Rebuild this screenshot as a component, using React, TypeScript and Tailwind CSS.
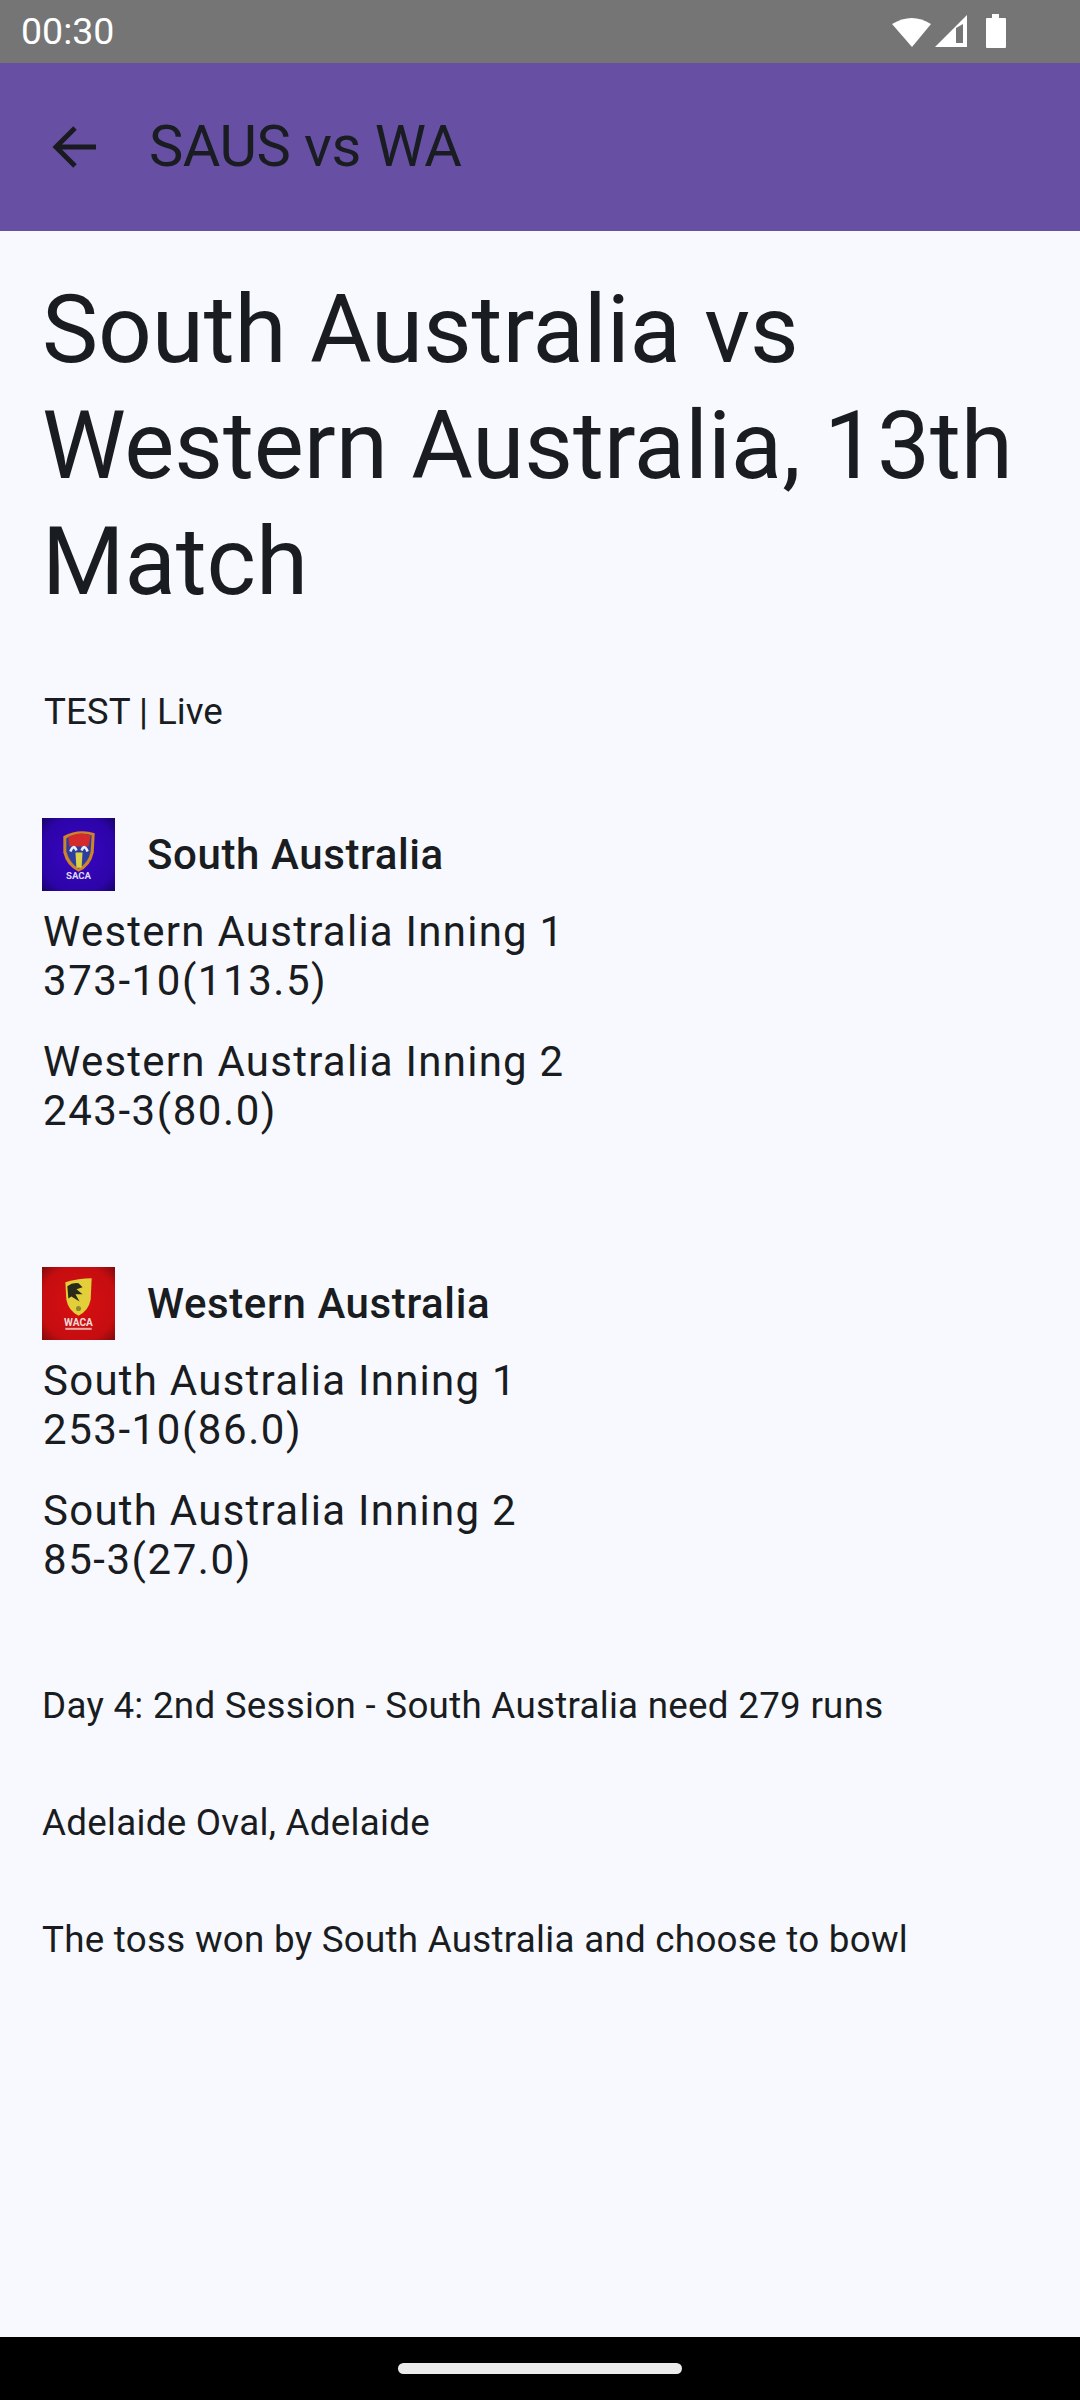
const innings = [
  {
    team: 'South Australia',
    logo: 'saca',
    scores: [
      ['Western Australia Inning 1', '373-10(113.5)'],
      ['Western Australia Inning 2', '243-3(80.0)'],
    ],
  },
  {
    team: 'Western Australia',
    logo: 'waca',
    scores: [
      ['South Australia Inning 1', '253-10(86.0)'],
      ['South Australia Inning 2', '85-3(27.0)'],
    ],
  },
];

const notes = [
  'Day 4: 2nd Session - South Australia need 279 runs',
  'Adelaide Oval, Adelaide',
  'The toss won by South Australia and choose to bowl',
];

function SacaLogo() {
  return (
    <svg viewBox="0 0 72 72" className="w-[73px] h-[73px] shrink-0">
      <defs>
        <radialGradient id="saca-bg" cx="0.5" cy="0.5" r="0.75">
          <stop offset="0" stopColor="#3a06c4" />
          <stop offset="0.7" stopColor="#2c04a8" />
          <stop offset="1" stopColor="#150358" />
        </radialGradient>
      </defs>
      <rect width="72" height="72" fill="url(#saca-bg)" />
      <path d="M21 18 Q36 10 52 15 L51 34 Q48 48 36 53 Q24 47 21 34 Z" fill="#d0842a" />
      <path d="M24 20 Q36 13 49 17 L48 33 Q46 44 36 50 Q27 44 24 33 Z" fill="#2d3f9e" />
      <path d="M26 19 Q36 13 48 17 L46 28 L27 28 Z" fill="#d42a2c" />
      <path d="M33 34 L40 34 L39 49 L34 49 Z" fill="#dcd24a" />
      <path d="M28 33 Q31 25 34 32 M45 33 Q42 25 39 32" stroke="#e8eefc" strokeWidth="2.5" fill="none" />
      <text x="36" y="60" textAnchor="middle" fontFamily="Roboto, sans-serif" fontWeight="700" fontSize="9.5" fill="#dcdaf4">SACA</text>
    </svg>
  );
}

function WacaLogo() {
  return (
    <svg viewBox="0 0 72 72" className="w-[73px] h-[73px] shrink-0">
      <defs>
        <radialGradient id="waca-bg" cx="0.5" cy="0.5" r="0.75">
          <stop offset="0" stopColor="#d80f12" />
          <stop offset="0.7" stopColor="#c50d10" />
          <stop offset="1" stopColor="#6e0a0c" />
        </radialGradient>
      </defs>
      <rect width="72" height="72" fill="url(#waca-bg)" />
      <path d="M23 15 Q36 11 49 11 L48 32 Q46 43 36 48 Q26 43 24 32 Z" fill="#e2cf3a" />
      <path d="M25 19 Q30 15 36 16 L40 20 L34 22 L40 27 L33 27 L37 34 L29 29 L26 31 Z" fill="#2a2a18" />
      <circle cx="36" cy="41" r="2.5" fill="#8b8a2c" />
      <text x="36" y="58" textAnchor="middle" fontFamily="Roboto, sans-serif" fontWeight="700" fontSize="10" fill="#f3dcd8">WACA</text>
      <rect x="23" y="60" width="26" height="2" fill="#e8a8a0" />
    </svg>
  );
}

export default function App() {
  return (
    <div className="w-[1080px] h-[2400px] flex flex-col bg-[#f8f9ff] text-[#191c20] font-['Roboto',sans-serif] overflow-hidden">
      <div className="h-[63px] shrink-0 bg-[#757575] flex items-center justify-between pl-[21px] pr-[72px] text-white">
        <span className="text-[37.5px] leading-none">00:30</span>
        <svg width="116" height="36" viewBox="0 0 116 36" fill="white">
          <path d="M0 10 Q20 -2 39 10 L20 33 Z" />
          <path fillRule="evenodd" d="M43 33 L75 1 L75 33 Z M64 14 L64 29 L71 29 L71 10 Z" />
          <path d="M94 5 Q94 4 95 4 L100 4 L100 0 L107 0 L107 4 L113 4 Q114 4 114 5 L114 33 Q114 34 113 34 L95 34 Q94 34 94 33 Z" />
        </svg>
      </div>

      <div className="h-[168px] shrink-0 bg-[#6750a4] flex items-center pl-[52px]">
        <svg width="44" height="44" viewBox="0 0 44 44" fill="none" stroke="#1a1b20" strokeWidth="5">
          <path d="M44 22 L4 22 M23 3 L4 22 L23 41" />
        </svg>
        <h1 className="ml-[53px] text-[57.75px] leading-none font-normal tracking-[-0.5px]">SAUS vs WA</h1>
      </div>

      <main className="flex-1 px-[42px] pt-[41px]">
        <h2 className="text-[94.5px] leading-[116px] font-normal tracking-[-0.1px]">South Australia vs Western Australia, 13th Match</h2>
        <p className="mt-[71px] ml-[2px] text-[36.75px] leading-[42px]">TEST | Live</p>

        <div className="mt-[85px] flex flex-col gap-[132px]">
          {innings.map((side) => (
            <section key={side.team}>
              <div className="flex items-center gap-[32px]">
                {side.logo === 'saca' ? <SacaLogo /> : <WacaLogo />}
                <h3 className="text-[42px] leading-[49px] font-medium tracking-[0.6px]">{side.team}</h3>
              </div>
              <div className="mt-[16px] ml-[1px] flex flex-col gap-[32px]">
                {side.scores.map(([label, score]) => (
                  <p key={label} className="text-[42px] leading-[49px] tracking-[1.25px]">
                    {label}
                    <br />
                    <span className="tracking-[1.55px]">{score}</span>
                  </p>
                ))}
              </div>
            </section>
          ))}
        </div>

        <div className="mt-[101px] flex flex-col gap-[75px]">
          {notes.map((note) => (
            <p key={note} className="text-[36.75px] leading-[42px] tracking-[0.27px]">{note}</p>
          ))}
        </div>
      </main>

      <div className="h-[63px] shrink-0 bg-black flex items-center justify-center">
        <div className="w-[284px] h-[11px] rounded-full bg-[#ebebeb]"></div>
      </div>
    </div>
  );
}
